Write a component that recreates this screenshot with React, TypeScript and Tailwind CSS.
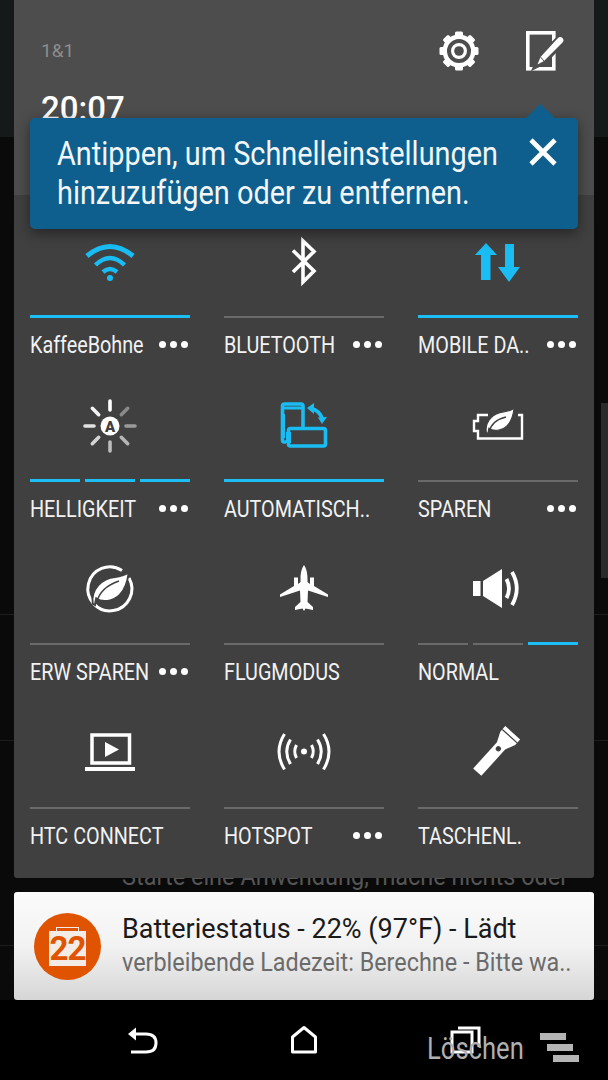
import type { ReactNode } from "react";

const CYAN = "#19bdf3";

function Wifi() {
    return (
        <svg viewBox="0 0 64 64" className="w-16 h-16" fill="none" stroke={CYAN} strokeWidth="5">
            <path d="M9 26 Q32 7 55 26" />
            <path d="M17.5 35 Q32 21 46.5 35" strokeWidth="4.5" />
            <path d="M25 42 Q32 36 39 42" strokeWidth="4.5" />
            <circle cx="32" cy="48" r="3" fill={CYAN} stroke="none" />
        </svg>
    );
}

function Bluetooth() {
    return (
        <svg viewBox="0 0 64 64" className="w-16 h-16" fill="none" stroke="#fff" strokeWidth="3.6">
            <path d="M21 20.5 L42 41 L31 52 L31 11 L42 21.5 L21 42" />
        </svg>
    );
}

function DataArrows() {
    return (
        <svg viewBox="0 0 64 64" className="w-16 h-16" fill={CYAN}>
            <path d="M20 13 L31 25 L24.5 25 L24.5 50 L15 50 L15 25 L9 25 Z" />
            <path d="M43 52 L32 37 L39 37 L39 14 L48 14 L48 37 L54 37 Z" />
        </svg>
    );
}

function Brightness() {
    const rays: [number, string][] = [
        [0, "#fff"], [45, "#8a8a8a"], [90, "#9a9a9a"], [135, "#b5b5b5"],
        [180, "#bdbdbd"], [225, "#d4d4d4"], [270, "#e2e2e2"], [315, "#f4f4f4"],
    ];
    return (
        <svg viewBox="0 0 64 64" className="w-16 h-16">
            {rays.map(([deg, color]) => (
                <line key={deg} x1="32" y1="7" x2="32" y2="16" stroke={color} strokeWidth="3.6" strokeLinecap="round" transform={`rotate(${deg} 32 32)`} />
            ))}
            <circle cx="32" cy="32" r="9.5" fill="#fff" />
            <text x="32" y="37.5" textAnchor="middle" fontFamily="Roboto, sans-serif" fontWeight="900" fontSize="15" fill="#404040">A</text>
        </svg>
    );
}

function Rotate() {
    return (
        <svg viewBox="0 0 64 64" className="w-16 h-16" fill="none" stroke={CYAN} strokeWidth="3.6">
            <path d="M14 48 L12 48 Q10.5 48 10.5 46 L10.5 12 Q10.5 10 12.5 10 L29 10 Q31 10 31 12 L31 33" />
            <path d="M10.5 14 L31 14" strokeWidth="3" />
            <path d="M11 20 L11 44" strokeWidth="4" />
            <rect x="16.5" y="34.5" width="37" height="17.5" rx="2" />
            <path d="M16.5 38 L16.5 49" strokeWidth="5" />
            <path d="M39 14.5 Q47 16 50.5 25" strokeWidth="3.8" />
            <path d="M35 14 L42 9 L42 20 Z" fill={CYAN} stroke="none" />
            <path d="M46 23.5 L55 23 L50 30 Z" fill={CYAN} stroke="none" />
        </svg>
    );
}

const LEAF = "M0 25 C-2 12 8 2 20 1 C25 0.5 29 -1 32 -3 C31 5 29 12 24 17 C18 23 8 24 3 20 C2.5 22 2 24 2 26 Z";

function BatteryLeaf() {
    return (
        <svg viewBox="0 0 64 64" className="w-16 h-16">
            <path d="M22 21 L12 21 L12 27 L8 27 L8 37 L12 37 L12 44.5 L56 44.5 L56 21 L52 21" fill="none" stroke="#fff" strokeWidth="2.4" />
            <path d={LEAF} transform="translate(20.3 16.9) scale(0.87)" fill="#fff" stroke="#404040" strokeWidth="1.4" />
            <path d="M23 38 C25 30 31 25 40 23" fill="none" stroke="#404040" strokeWidth="1.4" />
        </svg>
    );
}

function EcoLeaf() {
    return (
        <svg viewBox="0 0 64 64" className="w-16 h-16">
            <path d="M44 13.5 A22 22 0 1 0 51 21" fill="none" stroke="#fff" strokeWidth="3" />
            <path d={LEAF} transform="translate(14.8 18.9) scale(1.12)" fill="#fff" stroke="#404040" strokeWidth="1.6" />
            <path d="M18.5 46 C21 35 29 28 41 24" fill="none" stroke="#404040" strokeWidth="1.4" />
        </svg>
    );
}

function Plane() {
    return (
        <svg viewBox="0 0 64 64" className="w-16 h-16" fill="#fff">
            <path d="M32 8 C34 11 35.5 15 35.5 22 L35.5 25 L38 27 L38 20.5 L42 20.5 L42 29 L56 37.5 L56 40 L36 33.5 L35.5 45 L41 50 L41 53 L33.5 51.5 L32 54 L30.5 51.5 L23 53 L23 50 L28.5 45 L28 33.5 L8 40 L8 37.5 L22 29 L22 20.5 L26 20.5 L26 27 L28.5 25 L28.5 22 C28.5 15 30 11 32 8 Z" />
        </svg>
    );
}

function Speaker() {
    return (
        <svg viewBox="0 0 64 64" className="w-16 h-16" fill="none" stroke="#fff">
            <path d="M7 24 L14.5 24 L14.5 39 L7 39 Z M17 24 L36 12 L36 51 L17 39 Z" fill="#fff" stroke="none" />
            <path d="M40.5 22 Q45.5 31.5 40.5 41" strokeWidth="3.8" />
            <path d="M46 15 Q55.5 31.5 46 48" strokeWidth="3.8" />
        </svg>
    );
}

function Connect() {
    return (
        <svg viewBox="0 0 64 64" className="w-16 h-16" fill="none" stroke="#fff">
            <rect x="14" y="14" width="37.5" height="28" strokeWidth="3.5" />
            <path d="M27 21 L41 28.5 L27 36 Z" fill="#fff" stroke="none" />
            <rect x="7" y="46" width="50" height="4" fill="#fff" stroke="none" />
        </svg>
    );
}

function Hotspot() {
    return (
        <svg viewBox="0 0 64 64" className="w-16 h-16" fill="none" stroke="#fff" strokeWidth="3">
            <circle cx="32" cy="30.5" r="3" fill="#fff" stroke="none" />
            <path d="M24.5 24 Q21 30.5 24.5 37 M39.5 24 Q43 30.5 39.5 37" />
            <path d="M18.5 18.5 Q11 30.5 18.5 43 M45.5 18.5 Q53 30.5 45.5 43" />
            <path d="M12.5 13 Q1.5 30.5 12.5 48.5 M51.5 13 Q62.5 30.5 51.5 48.5" />
        </svg>
    );
}

function Flashlight() {
    return (
        <svg viewBox="0 0 64 64" className="w-16 h-16">
            <g transform="translate(-3 -0.5) rotate(42 32 32)">
                <path d="M22 5.5 L42 5.5 L42 13 L37.5 23 L37.5 58.5 L26.5 58.5 L26.5 23 L22 13 Z" fill="#fff" />
                <path d="M22 10 L42 10" stroke="#404040" strokeWidth="1.2" />
                <circle cx="32" cy="27" r="2.6" fill="#404040" />
            </g>
        </svg>
    );
}

function Dots() {
    return (
        <div className="flex gap-[4px] mr-[2px] -mt-[3px]">
            <span className="w-[7px] h-[7px] rounded-full bg-white" />
            <span className="w-[7px] h-[7px] rounded-full bg-white" />
            <span className="w-[7px] h-[7px] rounded-full bg-white" />
        </div>
    );
}

// segments: one flag per bar piece, true = lit
function Tile({ icon, label, segments = [false], more = false }: { icon: ReactNode; label: string; segments?: boolean[]; more?: boolean }) {
    return (
        <div className="flex flex-col">
            <div className="h-[117px] pt-[11px] flex items-center justify-center">{icon}</div>
            <div className="h-[3px] flex items-end gap-[5px]">
                {segments.map((lit, i) => (
                    <span key={i} className={lit ? "flex-1 h-[3px] bg-[#1bbff5]" : "flex-1 h-[2px] bg-[#6a6a6a]"} />
                ))}
            </div>
            <div className="h-[30.5px] mt-[13px] flex items-center">
                <div className="w-0 flex-1">
                    <span className="inline-block origin-left scale-x-[0.86] whitespace-nowrap text-[23px] leading-[30px] text-[#f2f2f2]">{label}</span>
                </div>
                {more && <Dots />}
            </div>
        </div>
    );
}

export default function App() {
    return (
        <div className="relative w-[608px] h-[1080px] overflow-hidden bg-[#0a0a0a] font-['Roboto',sans-serif]">
            {/* what is behind the shade */}
            <div className="absolute inset-0">
                <div className="h-[137px] bg-[#15191a]" />
                <div className="absolute top-[614px] inset-x-0 h-px bg-[#1c1c1c]" />
                <div className="absolute top-[740px] inset-x-0 h-px bg-[#1c1c1c]" />
                <div className="absolute top-[945px] inset-x-0 h-px bg-[#1c1c1c]" />
                <div className="absolute top-[403px] right-0 w-[7px] h-[175px] bg-[#2a2a2a]" />
                <div className="absolute top-[862px] left-[122px] whitespace-nowrap origin-left scale-x-[0.94] text-[25px] leading-[30px] text-[#555555]">
                    Starte eine Anwendung, mache nichts oder
                </div>
            </div>

            <div className="relative mx-[14px] h-[878px] rounded-b-[3px] bg-[#404040] overflow-hidden">
                <div className="h-[195px] bg-[#4d4d4d] flex justify-between">
                    <div className="pl-[27px] pt-[39px] flex flex-col">
                        <span className="text-[19px] leading-[24px] text-[#8c8c8c]">1&amp;1</span>
                        <span className="mt-[26px] text-[33px] leading-[40px] font-medium text-white">20:07</span>
                    </div>
                    <div className="flex gap-[38px] pr-[25px] pt-[26px] items-start">
                        <svg viewBox="0 0 48 48" className="w-12 h-12 mt-[1px]">
                            <g fill="#fff">
                                {[0, 45, 90, 135, 180, 225, 270, 315].map((deg) => (
                                    <rect key={deg} x="20" y="4.5" width="8" height="8" rx="1.5" transform={`rotate(${deg} 24 24)`} />
                                ))}
                            </g>
                            <circle cx="24" cy="24" r="16.5" fill="#fff" />
                            <circle cx="24" cy="24" r="10" fill="none" stroke="#4d4d4d" strokeWidth="4" />
                            <circle cx="24" cy="24" r="4.8" fill="#4d4d4d" />
                        </svg>
                        <svg viewBox="0 0 48 48" className="w-12 h-12">
                            <rect x="6.8" y="6.8" width="26" height="36" fill="none" stroke="#fff" strokeWidth="3.6" />
                            <path d="M38 12 L42 16 L23 36 L15 40 L19 31 Z" fill="#4d4d4d" stroke="#4d4d4d" strokeWidth="5" />
                            <path d="M37 12 Q39 10 41.5 12 Q43.5 14.5 41.5 16.5 L23 35 L16.5 38.5 L19.5 31 Z" fill="#fff" />
                            <path d="M19.5 31 L23 35" stroke="#4d4d4d" strokeWidth="1" />
                        </svg>
                    </div>
                </div>

                <div className="grid grid-cols-3 gap-x-[34px] auto-rows-[163.5px] px-[16px] pt-[3px]">
                    <Tile icon={<Wifi />} label="KaffeeBohne" segments={[true]} more />
                    <Tile icon={<Bluetooth />} label="BLUETOOTH" more />
                    <Tile icon={<DataArrows />} label="MOBILE DA.." segments={[true]} more />
                    <Tile icon={<Brightness />} label="HELLIGKEIT" segments={[true, true, true]} more />
                    <Tile icon={<Rotate />} label="AUTOMATISCH.." segments={[true]} />
                    <Tile icon={<BatteryLeaf />} label="SPAREN" more />
                    <Tile icon={<EcoLeaf />} label="ERW SPAREN" more />
                    <Tile icon={<Plane />} label="FLUGMODUS" />
                    <Tile icon={<Speaker />} label="NORMAL" segments={[false, false, true]} />
                    <Tile icon={<Connect />} label="HTC CONNECT" />
                    <Tile icon={<Hotspot />} label="HOTSPOT" more />
                    <Tile icon={<Flashlight />} label="TASCHENL." />
                </div>

                {/* hint bubble over the shade */}
                <div className="absolute left-[16px] top-[118px] w-[548px] h-[111px] rounded-[5px] bg-[#0e5f8e] shadow-[0_4px_14px_rgba(0,0,0,0.45)] flex justify-between pl-[27px] pt-[16px] pr-[21px]">
                    <span className="absolute right-[27px] -top-[10px] w-[21px] h-[21px] rotate-45 bg-[#0e5f8e]" />
                    <p className="relative w-0 flex-1 origin-left scale-x-[0.875] whitespace-nowrap text-[33px] leading-[39px] text-[#f2f6f9]">
                        Antippen, um Schnelleinstellungen<br />hinzuzufügen oder zu entfernen.
                    </p>
                    <svg viewBox="0 0 28 28" className="relative w-7 h-7 mt-[4px]" stroke="#fff" strokeWidth="4.6">
                        <path d="M2 2 L26 26 M26 2 L2 26" />
                    </svg>
                </div>
            </div>

            <div className="relative mt-[14px] mx-[14px] h-[108px] rounded-[3px] bg-gradient-to-b from-[#fbfbfb] via-[#f2f2f2] to-[#d6d6d6] flex items-center">
                <div className="shrink-0 ml-[20px] w-[67px] h-[67px] rounded-full bg-[#e05300] flex items-center justify-center">
                    <div className="relative w-[37px] h-[35px] mt-[4px] bg-[#f2ebe6] flex items-center justify-center">
                        <span className="absolute -top-[4px] left-[7px] right-[7px] h-[4px] border border-b-0 border-[#f2ebe6]" />
                        <span className="text-[33px] leading-none font-bold tracking-[-1px] text-[#e05300]">22</span>
                    </div>
                </div>
                <div className="w-0 flex-1 ml-[21px] pb-[2px] flex flex-col">
                    <span className="whitespace-nowrap text-[27px] leading-[36px] text-[#1a1a1a]">Batteriestatus - 22% (97°F) - Lädt</span>
                    <span className="origin-left scale-x-[0.935] whitespace-nowrap text-[25px] leading-[32px] text-[#6b6b6b]">verbleibende Ladezeit: Berechne - Bitte wa..</span>
                </div>
            </div>

            <div className="relative h-[80px] bg-black flex items-start pl-[111px] pt-[24px] gap-[97px]">
                <svg viewBox="0 0 64 32" className="w-16 h-8" fill="none" stroke="#fff" strokeWidth="3">
                    <path d="M20 10 L35 10 Q45 10 45 19 Q45 28 35 28 L20 28" />
                    <path d="M17 10 L25 3.5 L25 16.5 Z" fill="#fff" stroke="none" />
                </svg>
                <svg viewBox="0 0 64 32" className="w-16 h-8" fill="none" stroke="#fff" strokeWidth="3">
                    <path d="M20.5 13 L32 3.5 L43.5 13 L43.5 28 L20.5 28 Z" strokeLinejoin="round" />
                </svg>
                <svg viewBox="0 0 64 32" className="w-16 h-8" fill="none" stroke="#fff" strokeWidth="3">
                    <rect x="19" y="8" width="20" height="20" />
                    <path d="M25 4 L46 4 L46 23" />
                </svg>

                {/* leftover label and handle on top of the bar */}
                <span className="absolute left-[427px] top-[26px] origin-left scale-x-[0.8] whitespace-nowrap text-[32px] leading-[44px] text-[#b0b0b0]">Löschen</span>
                <div className="absolute left-[540px] top-[33px] flex flex-col gap-[4px]">
                    <span className="w-[26px] h-[7px] bg-[#b5b5b5]" />
                    <span className="ml-[7px] w-[26px] h-[7px] bg-[#b5b5b5]" />
                    <span className="ml-[13px] w-[26px] h-[7px] bg-[#b5b5b5]" />
                </div>
            </div>
        </div>
    );
}
